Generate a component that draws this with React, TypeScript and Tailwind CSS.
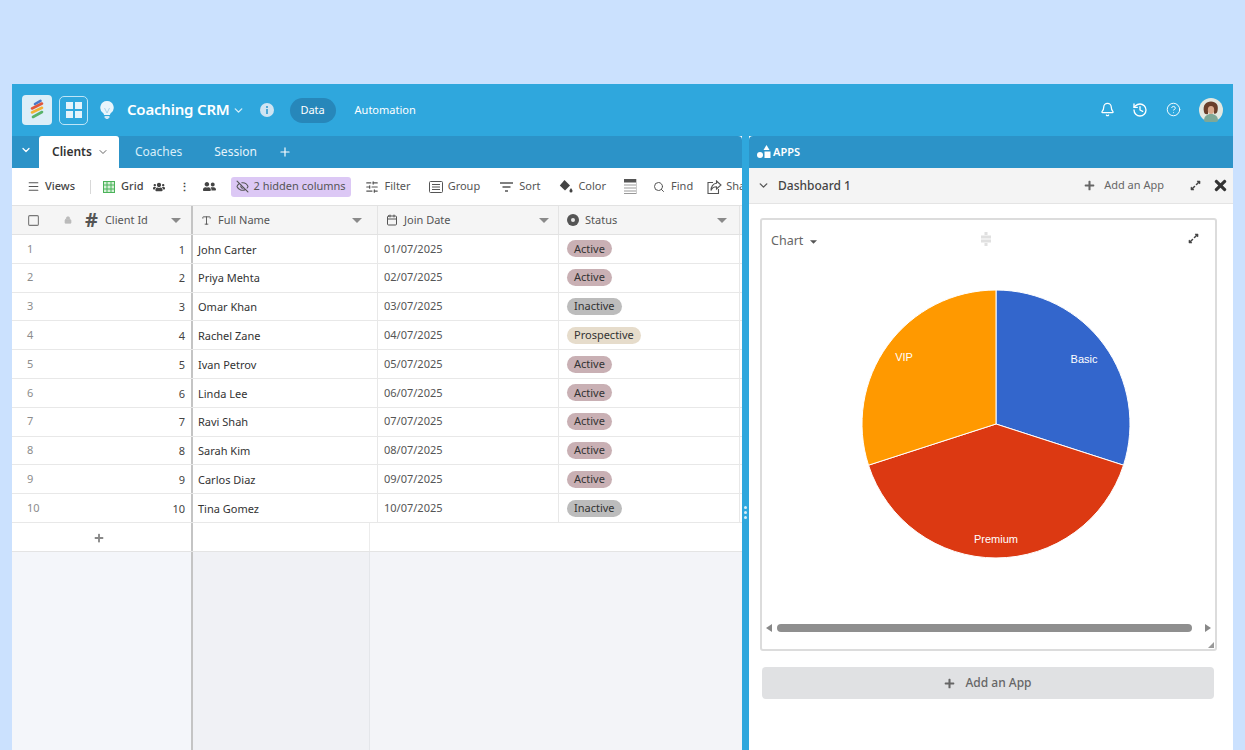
import {
  Bell,
  Calendar,
  ChevronDown,
  CircleHelp,
  EyeOff,
  History,
  Lock,
  Menu,
  Plus,
  Search,
  SlidersHorizontal,
  Square,
  Type,
} from "lucide-react";
import { FaExpandAlt, FaPlus, FaTimes, FaUserFriends, FaUsers } from "react-icons/fa";

type Client = {
  id: number;
  name: string;
  date: string;
  status: "Active" | "Inactive" | "Prospective";
};

const clients: Client[] = [
  { id: 1, name: "John Carter", date: "01/07/2025", status: "Active" },
  { id: 2, name: "Priya Mehta", date: "02/07/2025", status: "Active" },
  { id: 3, name: "Omar Khan", date: "03/07/2025", status: "Inactive" },
  { id: 4, name: "Rachel Zane", date: "04/07/2025", status: "Prospective" },
  { id: 5, name: "Ivan Petrov", date: "05/07/2025", status: "Active" },
  { id: 6, name: "Linda Lee", date: "06/07/2025", status: "Active" },
  { id: 7, name: "Ravi Shah", date: "07/07/2025", status: "Active" },
  { id: 8, name: "Sarah Kim", date: "08/07/2025", status: "Active" },
  { id: 9, name: "Carlos Diaz", date: "09/07/2025", status: "Active" },
  { id: 10, name: "Tina Gomez", date: "10/07/2025", status: "Inactive" },
];

const statusStyles = {
  Active: "bg-[#c9b0b4]",
  Inactive: "bg-[#bcbcbc]",
  Prospective: "bg-[#e6dccb]",
};

function Caret({ className = "" }: { className?: string }) {
  return (
    <svg width="10" height="5" viewBox="0 0 10 5" className={className}>
      <path d="M0 0h10L5 5z" fill="currentColor" />
    </svg>
  );
}

function Logo() {
  return (
    <svg width="16" height="22" viewBox="0 0 16 22">
      <g strokeWidth="2.600" strokeLinecap="round">
        <path d="M6 5 11.500 1.800" stroke="#4a78c8" />
        <path d="M3 9.500 13 4.500" stroke="#e2573a" />
        <path d="M3 13.500 13 8.800" stroke="#f2b233" />
        <path d="M4 18 13 13" stroke="#58b368" />
      </g>
    </svg>
  );
}

function Bulb() {
  return (
    <svg width="14" height="18" viewBox="0 0 14 18">
      <path
        d="M7 0a6.600 6.600 0 0 0-4 11.900c.8.700 1 1.500 1 2.100h6c0-.6.200-1.400 1-2.100A6.600 6.600 0 0 0 7 0z"
        fill="#e8f5fc"
      />
      <path d="M4.500 7 7 12l2.500-5" fill="none" stroke="#a8d4ea" strokeWidth="1" />
      <path d="M4.600 15h4.800v1.200L8 18H6l-1.400-1.800z" fill="#cfe8f6" />
    </svg>
  );
}

function InfoDot() {
  return (
    <svg width="14" height="14" viewBox="0 0 14 14">
      <circle cx="7" cy="7" r="7" fill="#cfe4f2" />
      <rect x="6" y="6" width="2" height="5" fill="#4fa9d6" />
      <rect x="6" y="3" width="2" height="2" fill="#4fa9d6" />
    </svg>
  );
}

function Avatar() {
  return (
    <svg width="24" height="24" viewBox="0 0 24 24">
      <circle cx="12" cy="12" r="12" fill="#e4e8e0" />
      <path d="M5 23c0-5 3-7 7-7s7 2 7 7a12 12 0 0 1-14 0z" fill="#7fa897" />
      <path d="M5 14C3.500 7 7 3.500 12 3.500S20 7 18.500 13c-.5 2.500-2 3-3.500 2.500V11H9v5c-2 .5-3.500 0-4-2z" fill="#6a3f2b" />
      <ellipse cx="12" cy="12" rx="3.200" ry="4" fill="#d9a98c" />
    </svg>
  );
}

function AppsIcon() {
  return (
    <svg width="14" height="14" viewBox="0 0 14 14" fill="#fff">
      <path d="M9.500 0l3 5h-6z" />
      <circle cx="3" cy="10" r="3" />
      <rect x="7.500" y="6.500" width="6" height="6.500" />
    </svg>
  );
}

function GridIcon() {
  return (
    <svg width="12" height="12" viewBox="0 0 12 12" fill="none" stroke="#4bb35a" strokeWidth="1">
      <rect x="0.500" y="0.500" width="11" height="11" fill="#d6f0d8" />
      <path d="M4 .5v11M8 .5v11M.5 4h11M.5 8h11" />
    </svg>
  );
}

function GroupIcon() {
  return (
    <svg width="14" height="12" viewBox="0 0 14 12" fill="none" stroke="#555" strokeWidth="1">
      <rect x="0.500" y="0.500" width="13" height="11" rx="1" />
      <path d="M3 3.500h8M3 6h8M3 8.500h8" />
    </svg>
  );
}

function SortIcon() {
  return (
    <svg width="13" height="10" viewBox="0 0 13 10" stroke="#555" strokeWidth="1.300">
      <path d="M0 1h13M2.500 5h8M5 9h3" />
    </svg>
  );
}

function ColorIcon() {
  return (
    <svg width="14" height="13" viewBox="0 0 14 13" fill="#444">
      <path d="M5.500 0 11 5.500 6 10.500.8 5.500z" />
      <path d="M12 8c1 1.400 1.500 2 1.500 3a1.500 1.500 0 0 1-3 0c0-1 .5-1.600 1.500-3z" />
    </svg>
  );
}

function RowHeightIcon() {
  return (
    <svg width="13" height="15" viewBox="0 0 13 15">
      <rect width="12" height="3.500" fill="#555" />
      <path d="M0 6h12M0 9h12M0 12h12M0 14.500h12" stroke="#999" strokeWidth="1" />
      <path d="M12.500 0v15" stroke="#ccc" strokeWidth="1" />
    </svg>
  );
}

function ShareIcon() {
  return (
    <svg width="15" height="14" viewBox="0 0 15 14" fill="none" stroke="#555" strokeWidth="1.100">
      <path d="M6 2.500H1v11h10.500V9" />
      <path d="M9.500 1 14 5 9.500 9V6.800C7 6.800 5 8 4 10.500 4 7 6 3.500 9.500 3.300z" />
    </svg>
  );
}

function StatusIcon() {
  return (
    <svg width="12" height="12" viewBox="0 0 12 12">
      <circle cx="6" cy="6" r="6" fill="#555" />
      <circle cx="6" cy="6" r="2" fill="#e8e8e8" />
    </svg>
  );
}

function DragHandle() {
  return (
    <svg width="12" height="14" viewBox="0 0 12 14" fill="#e0e0e0">
      <path d="M4.500 0h3v3h-3zM4.500 11h3v3h-3zM1 3.500h10v3H1zM1 7.500h10v3H1z" />
    </svg>
  );
}

function PieChart() {
  return (
    <svg width="270" height="270" viewBox="-135 -135 270 270">
      <g stroke="#fff" strokeWidth="1">
        <path d="M0 0V-134A134 134 0 0 1 127.500 41.200z" fill="#3366cc" />
        <path d="M0 0 127.500 41.200A134 134 0 0 1 -127.500 41.200z" fill="#dc3912" />
        <path d="M0 0-127.500 41.200A134 134 0 0 1 0-134z" fill="#ff9900" />
      </g>
      <g fill="#fff" fontSize="11" fontFamily="'Liberation Sans', sans-serif" textAnchor="middle">
        <text x="88" y="-61">Basic</text>
        <text x="0" y="119">Premium</text>
        <text x="-92" y="-63">VIP</text>
      </g>
    </svg>
  );
}

function ToolItem({
  icon,
  label,
  gap = "gap-[6px]",
}: {
  icon: React.ReactNode;
  label: string;
  gap?: string;
}) {
  return (
    <div className={`flex items-center ${gap} shrink-0`}>
      {icon}
      <span>{label}</span>
    </div>
  );
}

function ColumnHeader({
  icon,
  label,
  width,
  caretGap,
}: {
  icon: React.ReactNode;
  label: string;
  width: string;
  caretGap: string;
}) {
  return (
    <div className={`${width} flex items-center gap-[6px] pl-[8px] ${caretGap} border-r border-[#e4e4e4] shrink-0`}>
      {icon}
      <span className="flex-1">{label}</span>
      <Caret className="text-[#8a8a8a]" />
    </div>
  );
}

export default function App() {
  return (
    <div
      className="h-[750px] overflow-hidden bg-[#cbe1fe] pt-[84px] px-[12px] text-[#333]"
      style={{ fontFamily: "'Noto Sans', 'Open Sans', sans-serif" }}
    >
      <div className="h-[666px] w-[1221px] flex flex-col bg-[#2fa7dd]">
        {/* Top bar */}
        <div className="h-[52px] flex items-center shrink-0 pl-[10px] pr-[10px] text-white">
          <div className="w-[30px] h-[30px] rounded-[4px] bg-[#dceef8] flex items-center justify-center">
            <Logo />
          </div>
          <div className="ml-[7px] w-[29px] h-[29px] rounded-[5px] border border-[#bfe5f7] flex items-center justify-center">
            <div className="grid grid-cols-2 gap-[2px]">
              <span className="w-[7px] h-[7px] bg-[#e4f3fb]" />
              <span className="w-[7px] h-[7px] bg-[#e4f3fb]" />
              <span className="w-[7px] h-[7px] bg-[#e4f3fb]" />
              <span className="w-[7px] h-[7px] bg-[#e4f3fb]" />
            </div>
          </div>
          <div className="ml-[12px]">
            <Bulb />
          </div>
          <span className="ml-[13px] text-[15px] font-semibold tracking-[-0.2px] -mt-[1px]">Coaching CRM</span>
          <ChevronDown size={13} strokeWidth={2.500} className="ml-[2px] text-[#d5eefa]" />
          <div className="ml-[15px]">
            <InfoDot />
          </div>
          <div className="ml-[16px] h-[25px] w-[46px] rounded-full bg-[#2787ba] flex items-center justify-center text-[11px]">
            Data
          </div>
          <span className="ml-[19px] text-[11px]">Automation</span>
          <div className="ml-auto flex items-center -mt-[1px]">
            <Bell size={15} />
            <History size={16} className="ml-[17px]" />
            <CircleHelp size={15} strokeWidth={1.500} className="ml-[18px]" />
            <div className="ml-[18px]">
              <Avatar />
            </div>
          </div>
        </div>

        <div className="flex-1 flex min-h-0">
          {/* Table side */}
          <div className="w-[730px] shrink-0 flex flex-col bg-[#f3f4f8] overflow-hidden">
            <div className="h-[32px] bg-[#2c93c8] rounded-tr-[4px] flex items-end text-white text-[12px] shrink-0">
              <div className="w-[27px] h-full flex items-center justify-center pb-[4px]">
                <ChevronDown size={12} strokeWidth={2.500} />
              </div>
              <div className="w-[80px] h-full bg-white text-[#333] font-semibold flex items-center pl-[13px] gap-[5px] rounded-t-[3px]">
                Clients <ChevronDown size={12} className="text-[#666]" />
              </div>
              <div className="h-full flex items-center ml-[16px] text-[#d9eef9]">Coaches</div>
              <div className="h-full flex items-center ml-[32px] text-[#e6f4fb]">Session</div>
              <div className="h-full flex items-center ml-[21px]">
                <Plus size={14} />
              </div>
            </div>

            {/* Toolbar */}
            <div className="h-[37px] bg-white flex items-center pl-[15px] text-[11px] text-[#555] overflow-hidden shrink-0 whitespace-nowrap">
              <Menu size={13} className="text-[#555] shrink-0" />
              <span className="ml-[5px] font-medium text-[#444]">Views</span>
              <span className="ml-[15px] h-[14px] w-px bg-[#d8d8d8] shrink-0" />
              <span className="ml-[12px] shrink-0">
                <GridIcon />
              </span>
              <span className="ml-[6px] font-medium text-[#444]">Grid</span>
              <FaUsers size={12} className="ml-[9px] text-[#444] shrink-0" />
              <span className="ml-[14px] font-bold text-[#444] leading-none">⋮</span>
              <FaUserFriends size={13} className="ml-[13px] text-[#444] shrink-0" />
              <div className="ml-[15px] h-[20px] w-[120px] rounded-[3px] bg-[#dcc8f5] flex items-center gap-[5px] pl-[5px] shrink-0">
                <EyeOff size={13} />
                <span>2 hidden columns</span>
              </div>
              <div className="ml-[14px]">
                <ToolItem icon={<SlidersHorizontal size={14} />} label="Filter" />
              </div>
              <div className="ml-[18px]">
                <ToolItem icon={<GroupIcon />} label="Group" gap="gap-[5px]" />
              </div>
              <div className="ml-[20px]">
                <ToolItem icon={<SortIcon />} label="Sort" />
              </div>
              <div className="ml-[19px]">
                <ToolItem icon={<ColorIcon />} label="Color" gap="gap-[5px]" />
              </div>
              <div className="ml-[18px] shrink-0">
                <RowHeightIcon />
              </div>
              <div className="ml-[16px]">
                <ToolItem icon={<Search size={12} />} label="Find" />
              </div>
              <div className="ml-[14px]">
                <ToolItem icon={<ShareIcon />} label="Share" gap="gap-[4px]" />
              </div>
            </div>

            {/* Column headers */}
            <div className="h-[30px] bg-[#f5f5f5] border-y border-[#e2e2e2] flex text-[11px] text-[#555] shrink-0">
              <div className="w-[181px] shrink-0 flex items-center pl-[15px] pr-[10px] border-r-2 border-[#c4c4c4]">
                <Square size={13} className="text-[#777]" />
                <Lock size={8} className="ml-[24px] text-[#bbb]" fill="#bbb" />
                <span className="ml-[13px] text-[20px] font-bold leading-none text-[#555]">#</span>
                <span className="ml-[7px] flex-1">Client Id</span>
                <Caret className="text-[#8a8a8a]" />
              </div>
              <ColumnHeader width="w-[185px]" caretGap="pr-[15px]" icon={<Type size={11} />} label="Full Name" />
              <ColumnHeader width="w-[181px]" caretGap="pr-[9px]" icon={<Calendar size={12} />} label="Join Date" />
              <ColumnHeader width="w-[181px]" caretGap="pr-[12px]" icon={<StatusIcon />} label="Status" />
            </div>

            {/* Rows */}
            {clients.map((c) => (
              <div key={c.id} className="h-[28.8px] bg-white border-b border-[#e8e8e8] flex items-center text-[11px] shrink-0">
                <div className="w-[181px] h-full shrink-0 flex items-center justify-between pl-[15px] pr-[6px] border-r-2 border-[#c4c4c4]">
                  <span className="text-[#8c8c8c]">{c.id}</span>
                  <span className="text-[#444] pt-[2px]">{c.id}</span>
                </div>
                <div className="w-[185px] h-full shrink-0 flex items-center pl-[5px] pt-[2px] border-r border-[#e8e8e8] text-[#333]">
                  {c.name}
                </div>
                <div className="w-[181px] h-full shrink-0 flex items-center pl-[6px] border-r border-[#e8e8e8] text-[#555]">
                  {c.date}
                </div>
                <div className="w-[181px] h-full shrink-0 flex items-center pl-[8px] border-r border-[#e8e8e8]">
                  <span className={`${statusStyles[c.status]} h-[17px] rounded-full px-[7px] flex items-center text-[#333]`}>
                    {c.status}
                  </span>
                </div>
              </div>
            ))}

            {/* Add row */}
            <div className="h-[29px] flex bg-white border-b border-[#e4e4e4] shrink-0">
              <div className="w-[181px] flex items-center justify-center border-r-2 border-[#c4c4c4] text-[#888] pr-[5px] pt-[2px]">
                <FaPlus size={10} />
              </div>
              <div className="w-[177px] border-r border-[#ececec]" />
            </div>
            <div className="flex-1 flex">
              <div className="w-[181px] border-r-2 border-[#c4c4c4] bg-[#f4f6fa]" />
              <div className="w-[177px] border-r border-[#e4e6ea] bg-[#f0f1f5]" />
            </div>
          </div>

          {/* Divider */}
          <div className="w-[7px] shrink-0 flex flex-col items-center justify-center gap-[2px] pt-[138px]">
            <span className="w-[3px] h-[3px] rounded-full bg-[#d8eefa]" />
            <span className="w-[3px] h-[3px] rounded-full bg-[#d8eefa]" />
            <span className="w-[3px] h-[3px] rounded-full bg-[#d8eefa]" />
          </div>

          {/* Apps side */}
          <div className="flex-1 flex flex-col bg-white min-w-0">
            <div className="h-[32px] bg-[#2c93c8] rounded-tl-[4px] flex items-center gap-[2px] pl-[8px] text-white text-[11px] font-semibold shrink-0">
              <AppsIcon />
              APPS
            </div>
            <div className="h-[36px] bg-[#f4f4f4] border-b border-[#e4e4e4] flex items-center pl-[8px] pr-[4px] shrink-0">
              <ChevronDown size={13} strokeWidth={2.500} className="text-[#555]" />
              <span className="ml-[8px] text-[12px] font-medium text-[#444] pt-[1px]">Dashboard 1</span>
              <FaPlus size={11} className="ml-auto text-[#666]" />
              <span className="ml-[9px] text-[11px] text-[#666]">Add an App</span>
              <FaExpandAlt size={11} className="ml-[26px] text-[#444]" />
              <FaTimes size={17} className="ml-[11px] text-[#333]" />
            </div>

            {/* Chart card */}
            <div className="mt-[14px] ml-[11px] w-[457px] h-[433px] border-2 border-[#dcdcdc] rounded-[3px] flex flex-col relative shrink-0">
              <div className="h-[40px] flex items-center pl-[9px] pr-[16px] pt-[3px]">
                <span className="text-[12.500px] text-[#666]">Chart</span>
                <Caret className="ml-[7px] w-[7px] h-[4px] text-[#555]" />
                <div className="ml-[163px] -mt-[6px]">
                  <DragHandle />
                </div>
                <FaExpandAlt size={11} className="ml-auto -mt-[6px] text-[#444]" />
              </div>
              <div className="mt-[29px] ml-[99px]">
                <PieChart />
              </div>
              <div className="mt-auto mb-[17px] flex items-center px-[4px] gap-[5px]">
                <svg width="6" height="8" viewBox="0 0 6 8" fill="#888"><path d="M6 0v8L0 4z" /></svg>
                <div className="flex-1 h-[8px] rounded-full bg-[#8f8f8f]" />
                <svg width="6" height="8" viewBox="0 0 6 8" fill="#888" className="ml-[8px]"><path d="M0 0v8l6-4z" /></svg>
              </div>
              <svg width="6" height="6" viewBox="0 0 6 6" fill="#999" className="absolute right-[1px] bottom-[1px]">
                <path d="M6 0v6H0z" />
              </svg>
            </div>

            <div className="mt-[16px] ml-[13px] w-[452px] h-[32px] rounded-[4px] bg-[#e0e1e3] flex items-center justify-center gap-[10px] text-[12px] font-medium text-[#666] shrink-0">
              <FaPlus size={11} />
              Add an App
            </div>
          </div>
        </div>
      </div>
    </div>
  );
}
